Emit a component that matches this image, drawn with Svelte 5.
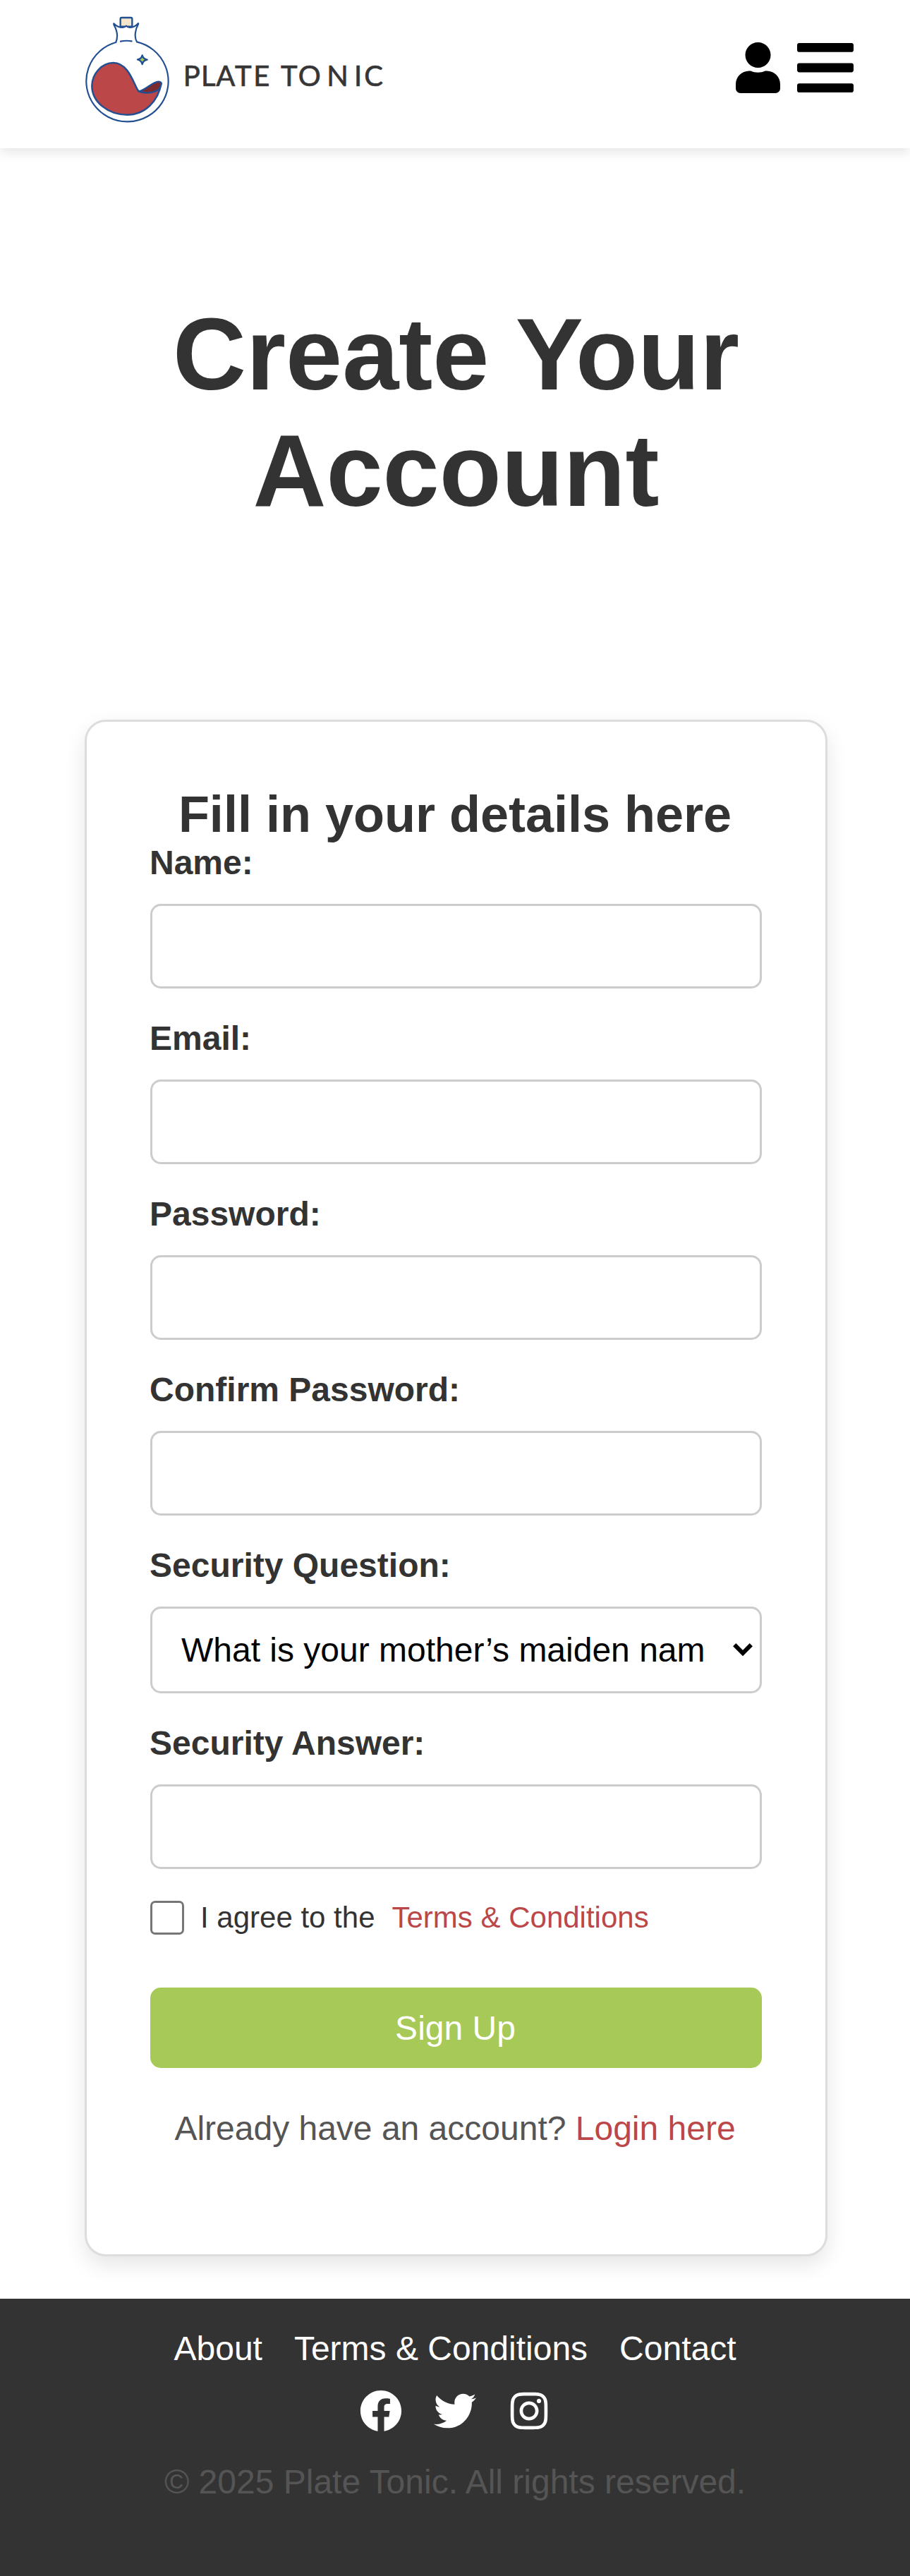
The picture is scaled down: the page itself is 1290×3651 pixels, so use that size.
<script>
  const fields = [
    { id: 'name', label: 'Name:', type: 'text' },
    { id: 'email', label: 'Email:', type: 'email' },
    { id: 'password', label: 'Password:', type: 'password' },
    { id: 'confirm', label: 'Confirm Password:', type: 'password' },
    { id: 'question', label: 'Security Question:', type: 'select' },
    { id: 'answer', label: 'Security Answer:', type: 'text' }
  ];
  const questions = ['What is your mother’s maiden name?'];
  const links = ['About', 'Terms & Conditions', 'Contact'];
  const socials = [
    {
      name: 'Facebook',
      box: '0 0 512 512',
      path: 'M504 256C504 119 393 8 256 8S8 119 8 256c0 123.78 90.69 226.38 209.25 245V327.69h-63V256h63v-54.64c0-62.15 37-96.48 93.67-96.48 27.14 0 55.52 4.84 55.52 4.84v61h-31.28c-30.8 0-40.41 19.12-40.41 38.73V256h68.78l-11 71.69h-57.78V501C413.31 482.38 504 379.78 504 256z'
    },
    {
      name: 'Twitter',
      box: '0 0 512 512',
      path: 'M459.37 151.716c.325 4.548.325 9.097.325 13.645 0 138.72-105.583 298.558-298.558 298.558-59.452 0-114.68-17.219-161.137-47.106 8.447.974 16.568 1.299 25.34 1.299 49.055 0 94.213-16.568 130.274-44.832-46.132-.975-84.792-31.188-98.112-72.772 6.498.974 12.995 1.624 19.818 1.624 9.421 0 18.843-1.3 27.614-3.573-48.081-9.747-84.143-51.98-84.143-102.985v-1.299c13.969 7.797 30.214 12.67 47.431 13.319-28.264-18.843-46.781-51.005-46.781-87.391 0-19.492 5.197-37.36 14.294-52.954 51.655 63.675 129.3 105.258 216.365 109.807-1.624-7.797-2.599-15.918-2.599-24.04 0-57.828 46.782-104.934 104.934-104.934 30.213 0 57.502 12.67 76.67 33.137 23.715-4.548 46.456-13.32 66.599-25.34-7.798 24.366-24.366 44.833-46.132 57.827 21.117-2.273 41.584-8.122 60.426-16.243-14.292 20.791-32.161 39.308-52.628 54.253z'
    },
    {
      name: 'Instagram',
      box: '0 0 448 512',
      path: 'M224.1 141c-63.6 0-114.9 51.3-114.9 114.9s51.3 114.9 114.9 114.9S339 319.5 339 255.9 287.7 141 224.1 141zm0 189.6c-41.1 0-74.7-33.5-74.7-74.7s33.5-74.7 74.7-74.7 74.7 33.5 74.7 74.7-33.6 74.7-74.7 74.7zm146.4-194.3c0 14.9-12 26.8-26.8 26.8-14.9 0-26.8-12-26.8-26.8s12-26.8 26.8-26.8 26.8 12 26.8 26.8zm76.1 27.2c-1.7-35.9-9.9-67.7-36.2-93.9-26.2-26.2-58-34.4-93.9-36.2-37-2.1-147.9-2.1-184.9 0-35.8 1.7-67.6 9.9-93.9 36.1s-34.4 58-36.2 93.9c-2.1 37-2.1 147.9 0 184.9 1.7 35.9 9.9 67.7 36.2 93.9s58 34.4 93.9 36.2c37 2.1 147.9 2.1 184.9 0 35.9-1.7 67.7-9.9 93.9-36.2 26.2-26.2 34.4-58 36.2-93.9 2.1-37 2.1-147.8 0-184.8zM398.8 388c-7.8 19.6-22.9 34.7-42.6 42.6-29.5 11.7-99.5 9-132.1 9s-102.7 2.6-132.1-9c-19.6-7.8-34.7-22.9-42.6-42.6-11.7-29.5-9-99.5-9-132.1s-2.6-102.7 9-132.1c7.8-19.6 22.9-34.7 42.6-42.6 29.5-11.7 99.5-9 132.1-9s102.7-2.6 132.1 9c19.6 7.8 34.7 22.9 42.6 42.6 11.7 29.5 9 99.5 9 132.1s2.7 102.7-9 132.1z'
    }
  ];
</script>

<header>
  <svg class="logo" viewBox="60 69 1290 456" role="img" aria-label="Plate Tonic">
    <g stroke="#224f92" stroke-linecap="round" stroke-linejoin="round">
      <path d="M212 113V80q0-5 5-5h40q5 0 5 5v33z" fill="#f3e6cb" stroke-width="7" />
      <path d="M193 180A174.500 172 0 1 0 282 178C269 158 276 124 288 103V99Q272 117 251 117Q243 117 237 110Q231 117 222 117Q199 117 184 100V105C198 129 202 157 193 180" fill="#fff" stroke-width="6.500" />
      <path d="M213 176Q236 171 260 175" fill="none" stroke-width="6.500" />
      <path d="M289 387C270 364 249 267 182 267C131 267 91 316 91 365A150 123 0 0 0 241 488C316 488 374 430 386 353C350 395 318 401 289 387Z" fill="#bc4749" stroke-width="7.500" />
      <path d="M290 388C316 387 348 347 374 347Q388 347 385 361C377 398 325 400 290 388Z" fill="#7b2a2f" stroke-width="7" />
      <path d="M305 235Q308 251 326 254Q309 257 305 273Q302 257 285 253Q302 251 305 235Z" fill="#a7c957" stroke-width="7" />
    </g>
    <text class="wordmark" y="366" x="479 555 619 699 778 835 894 968 1090 1206 1249">PLATE TONIC</text>
  </svg>
  <div class="actions">
    <svg class="user" viewBox="0 0 448 512"><path d="M224 256c70.7 0 128-57.3 128-128S294.7 0 224 0 96 57.3 96 128s57.3 128 128 128zm89.6 32h-16.7c-22.2 10.2-46.9 16-72.9 16s-50.6-5.8-72.9-16h-16.7C60.2 288 0 348.2 0 422.4V464c0 26.5 21.5 48 48 48h352c26.5 0 48-21.5 48-48v-41.6c0-74.2-60.2-134.4-134.4-134.4z" /></svg>
    <svg class="bars" viewBox="0 0 448 512"><path d="M16 132h416c8.837 0 16-7.163 16-16V76c0-8.837-7.163-16-16-16H16C7.163 60 0 67.163 0 76v40c0 8.837 7.163 16 16 16zm0 160h416c8.837 0 16-7.163 16-16v-40c0-8.837-7.163-16-16-16H16c-8.837 0-16 7.163-16 16v40c0 8.837 7.163 16 16 16zm0 160h416c8.837 0 16-7.163 16-16v-40c0-8.837-7.163-16-16-16H16c-8.837 0-16 7.163-16 16v40c0 8.837 7.163 16 16 16z" /></svg>
  </div>
</header>

<main>
  <h1>Create Your Account</h1>
  <form class="card">
    <h2>Fill in your details here</h2>
    {#each fields as field}
      <div class="field">
        <label for={field.id}>{field.label}</label>
        {#if field.type === 'select'}
          <div class="select">
            <select id={field.id}>
              {#each questions as question}<option>{question}</option>{/each}
            </select>
            <svg class="chevron" viewBox="0 0 28 18"><path d="M2.200 2.200L14 14L25.800 2.200" fill="none" stroke="#000" stroke-width="6" /></svg>
          </div>
        {:else}
          <input id={field.id} type={field.type} />
        {/if}
      </div>
    {/each}
    <div class="agree">
      <input id="agree" type="checkbox" />
      <label for="agree">I agree to the</label>
      <a href="#terms">Terms &amp; Conditions</a>
    </div>
    <button type="button">Sign Up</button>
    <p class="login">Already have an account? <a href="#login">Login here</a></p>
  </form>
</main>

<footer>
  <nav>
    {#each links as link}<a href="#top">{link}</a>{/each}
  </nav>
  <div class="socials">
    {#each socials as social}
      <svg viewBox={social.box} role="img" aria-label={social.name}><path d={social.path} /></svg>
    {/each}
  </div>
  <p>© 2025 Plate Tonic. All rights reserved.</p>
</footer>

<style>
  :global(body) {
    margin: 0;
    background: #fff;
    font-family: 'Liberation Sans', Arial, sans-serif;
    font-size: 48px;
    color: #333;
  }
  :global(#app) {
    display: flow-root;
  }
  header {
    box-sizing: border-box;
    height: 210px;
    padding: 23px 80px 0 120px;
    display: flex;
    justify-content: space-between;
    align-items: flex-start;
    box-shadow: 0 6px 15px rgba(0, 0, 0, 0.1);
  }
  .logo {
    width: 430px;
    height: 152px;
  }
  .wordmark {
    font-family: Lato, sans-serif;
    font-size: 120px;
    fill: #363636;
    stroke: #363636;
    stroke-width: 2;
  }
  .actions {
    display: flex;
    align-items: center;
    gap: 24px;
    height: 146px;
  }
  .user {
    width: 63px;
    height: 72px;
  }
  .bars {
    width: 80px;
    height: 92px;
  }
  h1 {
    margin: 0;
    padding: 210px 180px 270px 183px;
    font-size: 144px;
    line-height: 165px;
    text-align: center;
  }
  main {
    padding-bottom: 60px;
  }
  .card {
    box-sizing: border-box;
    width: 1053px;
    height: 2178px;
    margin-left: 120px;
    padding: 90px;
    border: 3px solid #ddd;
    border-radius: 30px;
    background: #fff;
    box-shadow: 0 12px 30px rgba(0, 0, 0, 0.1);
  }
  h2 {
    margin: 0;
    padding-right: 3px;
    font-size: 72px;
    line-height: 82px;
    text-align: center;
  }
  .field {
    margin-bottom: 43px;
  }
  .field label {
    display: block;
    height: 86px;
    margin-left: -1px;
    line-height: 55px;
    font-weight: bold;
  }
  .field input,
  select {
    box-sizing: border-box;
    display: block;
    width: 100%;
    height: 120px;
    border: 3px solid #ccc;
    border-radius: 15px;
    background: #fff;
  }
  .select {
    position: relative;
  }
  .field select {
    appearance: none;
    height: 123px;
    padding: 0 76px 0 41px;
    font: inherit;
    color: #000;
  }
  .chevron {
    position: absolute;
    top: 52px;
    right: 13px;
    width: 28px;
    height: 18px;
  }
  .agree {
    display: flex;
    align-items: center;
    height: 48px;
    margin-top: 45px;
    font-size: 42px;
  }
  .agree input {
    appearance: none;
    box-sizing: border-box;
    width: 48px;
    height: 48px;
    margin: 0 23px 0 0;
    border: 3px solid #767676;
    border-radius: 7px;
  }
  .agree label {
    margin-right: 24px;
  }
  a {
    color: #bc4749;
    text-decoration: none;
  }
  button {
    display: block;
    width: 100%;
    height: 114px;
    margin: 75px 0 0;
    padding: 0 2px 0 0;
    border: 0;
    border-radius: 15px;
    background: #a7c957;
    color: #fff;
    font: inherit;
  }
  .login {
    margin: 58px 0 0;
    padding-right: 3px;
    line-height: 55px;
    text-align: center;
    color: #555;
  }
  footer {
    box-sizing: border-box;
    height: 393px;
    padding-top: 43px;
    background: #333;
  }
  nav {
    display: flex;
    justify-content: center;
    gap: 45px;
    line-height: 55px;
  }
  nav a {
    color: #fff;
  }
  .socials {
    display: flex;
    justify-content: center;
    gap: 45px;
    margin-top: 31px;
  }
  .socials svg {
    width: 60px;
    height: 60px;
    fill: #fff;
  }
  footer p {
    margin: 43px 0 0;
    line-height: 55px;
    text-align: center;
    color: #555;
  }
</style>
